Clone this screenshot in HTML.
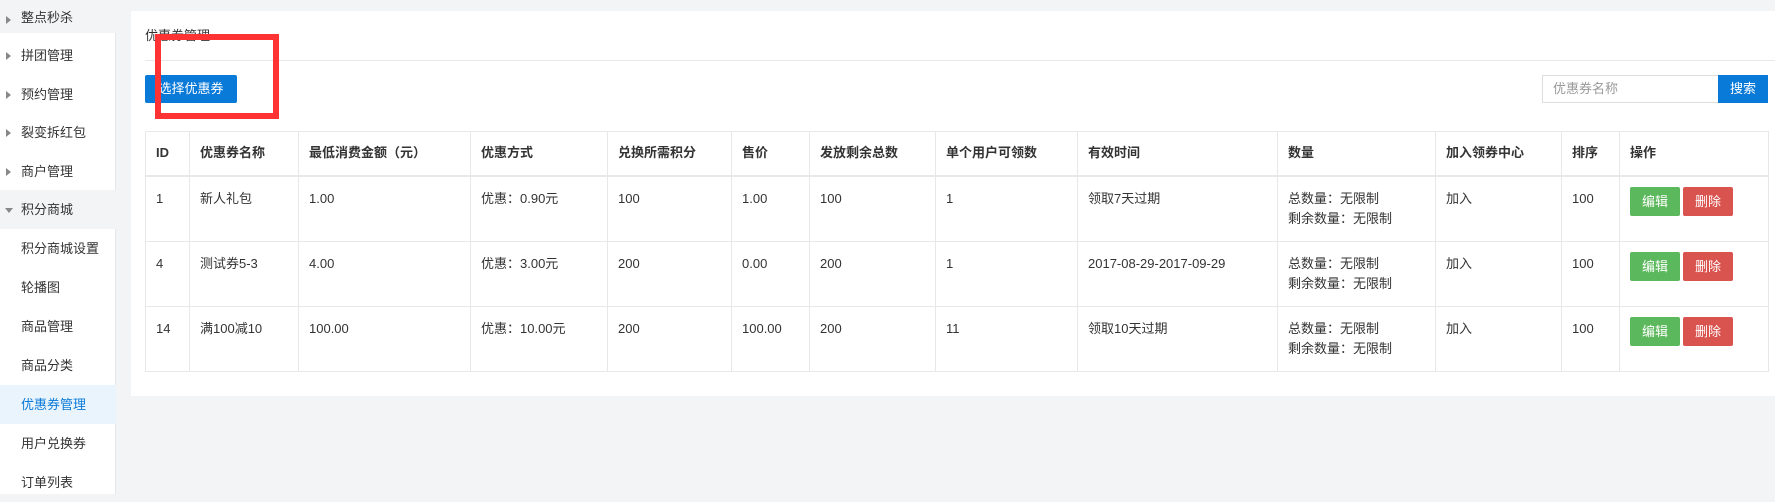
<!DOCTYPE html>
<html><head><meta charset="utf-8"><style>
*{margin:0;padding:0;box-sizing:border-box}
body{width:1775px;height:494px;overflow:hidden;background:#f3f4f6;font-family:"Liberation Sans","Noto Sans CJK SC",sans-serif;font-size:13px;color:#333;position:relative}
.side{position:absolute;left:0;top:0;width:116px;height:494px;background:#fff;border-right:1px solid #e8e8e8}
.si{position:absolute;left:0;width:116px;height:39px;line-height:39px;font-size:13px;color:#333}
.si.g{background:#f3f4f6}
.si .ar{position:absolute;left:6px;top:16px;width:0;height:0;border-left:5px solid #888;border-top:4px solid transparent;border-bottom:4px solid transparent}
.si .dn{position:absolute;left:5px;top:18px;border-top:5px solid #888;border-left:4px solid transparent;border-right:4px solid transparent}
.si span{position:absolute;left:21px}
.panel{position:absolute;left:131px;top:11px;width:1644px;height:385px;background:#fff}
.title{position:absolute;left:145px;top:25px;font-size:13px}
.hr{position:absolute;left:145px;top:60px;width:1630px;height:1px;background:#e8e8e8}
.btn{position:absolute;left:145px;top:75px;width:92px;height:28px;background:#0a7ad9;color:#fff;line-height:28px;text-align:center;border-radius:2px}
.inp{position:absolute;left:1542px;top:75px;width:177px;height:28px;border:1px solid #ddd;color:#999;line-height:26px;padding-left:10px}
.sb{position:absolute;left:1718px;top:75px;width:50px;height:28px;background:#0a7ad9;color:#fff;line-height:28px;text-align:center}
table{position:absolute;left:145px;top:131px;width:1623px;border-collapse:collapse;table-layout:fixed}
td,th{border:1px solid #e8e8e8;text-align:left;vertical-align:top;padding:12px 10px;font-size:13px;line-height:20px;font-weight:normal}
th{font-weight:bold;height:44px;border-bottom:2px solid #e8e8e8;vertical-align:middle;padding:0 10px}
td{height:64px}
.e,.d{display:inline-block;width:50px;height:29px;line-height:29px;text-align:center;color:#fff;border-radius:2px;margin-top:-2px}
.e{background:#5cb85c}.d{background:#d9534f;margin-left:3px}
.red{position:absolute;left:155px;top:34px;width:124px;height:85px;border:6px solid #f33}
</style></head><body>
<div class="side">
<div class="si g" style="top:0;height:33px;line-height:36px"><i class="ar"></i><span>整点秒杀</span></div>
<div class="si" style="top:36px"><i class="ar"></i><span>拼团管理</span></div>
<div class="si" style="top:75px"><i class="ar"></i><span>预约管理</span></div>
<div class="si" style="top:113px"><i class="ar"></i><span>裂变拆红包</span></div>
<div class="si" style="top:152px"><i class="ar"></i><span>商户管理</span></div>
<div class="si g" style="top:190px"><i class="dn"></i><span>积分商城</span></div>
<div class="si" style="top:229px"><span>积分商城设置</span></div>
<div class="si" style="top:268px"><span>轮播图</span></div>
<div class="si" style="top:307px"><span>商品管理</span></div>
<div class="si" style="top:346px"><span>商品分类</span></div>
<div class="si" style="top:385px;background:#eaf4fd;color:#0a7ad9"><span>优惠券管理</span></div>
<div class="si" style="top:424px"><span>用户兑换券</span></div>
<div class="si" style="top:463px"><span>订单列表</span></div>
</div>
<div class="panel"></div>
<div class="title">优惠券管理</div>
<div class="hr"></div>
<div class="btn">选择优惠券</div>
<div class="inp">优惠券名称</div><div class="sb">搜索</div>
<table>
<colgroup><col style="width:44px"><col style="width:109px"><col style="width:172px"><col style="width:137px"><col style="width:124px"><col style="width:78px"><col style="width:126px"><col style="width:142px"><col style="width:200px"><col style="width:158px"><col style="width:126px"><col style="width:58px"><col style="width:149px"></colgroup>
<tr><th>ID</th><th>优惠券名称</th><th>最低消费金额（元）</th><th>优惠方式</th><th>兑换所需积分</th><th>售价</th><th>发放剩余总数</th><th>单个用户可领数</th><th>有效时间</th><th>数量</th><th>加入领券中心</th><th>排序</th><th>操作</th></tr>
<tr><td>1</td><td>新人礼包</td><td>1.00</td><td>优惠：0.90元</td><td>100</td><td>1.00</td><td>100</td><td>1</td><td>领取7天过期</td><td>总数量：无限制<br>剩余数量：无限制</td><td>加入</td><td>100</td><td><span class="e">编辑</span><span class="d">删除</span></td></tr>
<tr><td>4</td><td>测试券5-3</td><td>4.00</td><td>优惠：3.00元</td><td>200</td><td>0.00</td><td>200</td><td>1</td><td>2017-08-29-2017-09-29</td><td>总数量：无限制<br>剩余数量：无限制</td><td>加入</td><td>100</td><td><span class="e">编辑</span><span class="d">删除</span></td></tr>
<tr><td>14</td><td>满100减10</td><td>100.00</td><td>优惠：10.00元</td><td>200</td><td>100.00</td><td>200</td><td>11</td><td>领取10天过期</td><td>总数量：无限制<br>剩余数量：无限制</td><td>加入</td><td>100</td><td><span class="e">编辑</span><span class="d">删除</span></td></tr>
</table>
<div class="red"></div>
</body></html>
